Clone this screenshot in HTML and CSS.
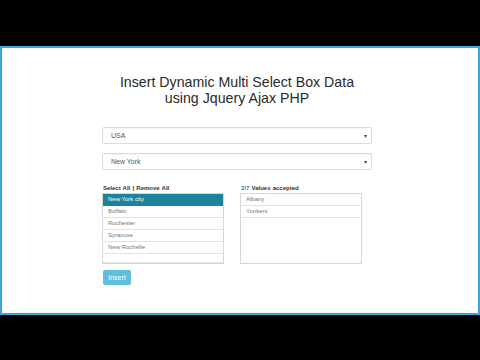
FILE: index.html
```html
<!DOCTYPE html>
<html>
<head>
<meta charset="utf-8">
<link rel="stylesheet" href="styles.css">
</head>
<body>
<div class="frame">
  <div class="wrap">
    <h1 class="title">Insert Dynamic Multi Select Box Data<br>using Jquery Ajax PHP</h1>
    <div class="select first"><span>USA</span><span class="caret">&#9662;</span></div>
    <div class="select"><span>New York</span><span class="caret">&#9662;</span></div>
    <div class="lists">
      <div class="col">
        <div class="label">Select All | Remove All</div>
        <div class="listbox">
          <div class="row active">New York city</div>
          <div class="row">Buffalo</div>
          <div class="row">Rochester</div>
          <div class="row">Syracuse</div>
          <div class="row">New Rochelle</div>
          <div class="row"></div>
        </div>
      </div>
      <div class="col">
        <div class="label"><span class="count">2/7</span> Values accepted</div>
        <div class="listbox inset">
          <div class="row">Albany</div>
          <div class="row">Yonkers</div>
        </div>
      </div>
    </div>
    <button class="btn">Insert</button>
  </div>
</div>
</body>
</html>
```

FILE: styles.css
```css
html, body {
  margin: 0;
  padding: 0;
  background: #000;
  width: 480px;
  height: 360px;
  overflow: hidden;
  font-family: "Liberation Sans", Arial, sans-serif;
}
body {
  padding-top: 46px;
  box-sizing: border-box;
}
.frame {
  box-sizing: border-box;
  height: 269px;
  border: 2px solid #3ea6d6;
  background: #fff;
}
.wrap {
  margin-left: 100px;
  width: 270px;
  display: flex;
  flex-direction: column;
}
.title {
  margin: 26px 0 0;
  font-size: 14.2px;
  line-height: 16px;
  font-weight: normal;
  color: #2a2a2a;
  text-align: center;
}
.select {
  box-sizing: border-box;
  height: 17px;
  border: 1px solid #dcdcdc;
  border-radius: 2px;
  display: flex;
  align-items: center;
  justify-content: space-between;
  padding: 0 4px 0 8px;
  font-size: 7px;
  color: #555;
  margin-top: 9px;
  box-shadow: inset 0 1px 1px rgba(0,0,0,0.04);
}
.select.first {
  margin-top: 21px;
}
.caret {
  font-size: 6px;
  color: #444;
}
.lists {
  display: flex;
  gap: 16px;
  margin-top: 14px;
}
.col {
  width: 122px;
  display: flex;
  flex-direction: column;
}
.label {
  height: 9px;
  font-size: 6px;
  line-height: 8px;
  font-weight: bold;
  color: #333;
  padding-left: 1px;
  word-spacing: 0.5px;
}
.count {
  color: #1b8aa3;
}
.listbox {
  box-sizing: border-box;
  height: 71px;
  border: 1px solid #d6d6d6;
  display: flex;
  flex-direction: column;
}
.listbox.inset {
  padding: 0 1px;
}
.row {
  box-sizing: border-box;
  height: 12px;
  line-height: 11px;
  font-size: 6px;
  color: #777;
  padding-left: 5px;
  border-bottom: 1px solid #e2e2e2;
}
.inset .row {
  padding-left: 4px;
}
.row.active {
  background: #1c8399;
  color: #fff;
  border-bottom-color: #1c8399;
}
.btn {
  align-self: flex-start;
  margin: 6px 0 0 1px;
  width: 28px;
  height: 15px;
  padding: 0;
  border: none;
  border-radius: 2px;
  background: #5dbfdd;
  color: #fff;
  font-family: "Liberation Sans", Arial, sans-serif;
  font-size: 7px;
}
```
